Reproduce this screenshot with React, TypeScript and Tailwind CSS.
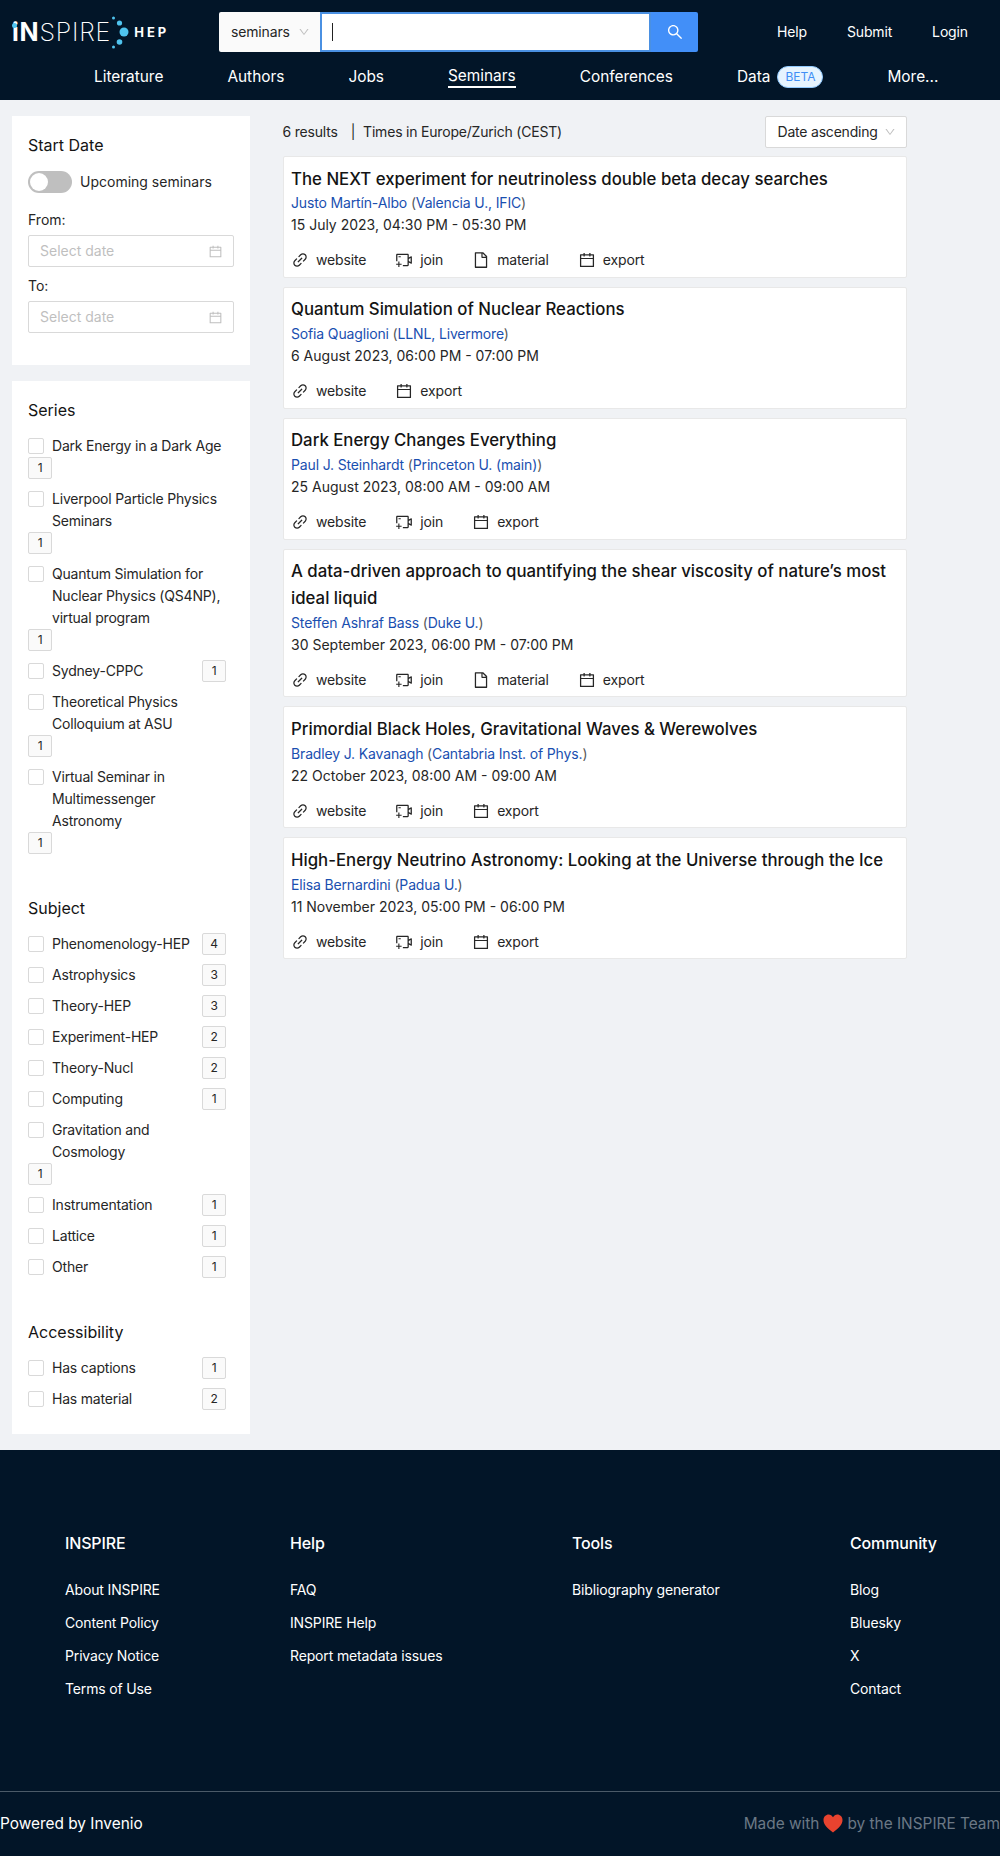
import {
  AiOutlineCalendar,
  AiOutlineDown,
  AiOutlineFile,
  AiOutlineLink,
  AiOutlineSearch,
  AiOutlineVideoCameraAdd,
} from "react-icons/ai";

type Seminar = {
  title: string;
  speaker: string;
  affiliation: string;
  date: string;
  join?: boolean;
  material?: boolean;
};

const seminars: Seminar[] = [
  {
    title: "The NEXT experiment for neutrinoless double beta decay searches",
    speaker: "Justo Martín-Albo",
    affiliation: "Valencia U., IFIC",
    date: "15 July 2023, 04:30 PM - 05:30 PM",
    join: true,
    material: true,
  },
  {
    title: "Quantum Simulation of Nuclear Reactions",
    speaker: "Sofia Quaglioni",
    affiliation: "LLNL, Livermore",
    date: "6 August 2023, 06:00 PM - 07:00 PM",
  },
  {
    title: "Dark Energy Changes Everything",
    speaker: "Paul J. Steinhardt",
    affiliation: "Princeton U. (main)",
    date: "25 August 2023, 08:00 AM - 09:00 AM",
    join: true,
  },
  {
    title: "A data-driven approach to quantifying the shear viscosity of nature’s most ideal liquid",
    speaker: "Steffen Ashraf Bass",
    affiliation: "Duke U.",
    date: "30 September 2023, 06:00 PM - 07:00 PM",
    join: true,
    material: true,
  },
  {
    title: "Primordial Black Holes, Gravitational Waves & Werewolves",
    speaker: "Bradley J. Kavanagh",
    affiliation: "Cantabria Inst. of Phys.",
    date: "22 October 2023, 08:00 AM - 09:00 AM",
    join: true,
  },
  {
    title: "High-Energy Neutrino Astronomy: Looking at the Universe through the Ice",
    speaker: "Elisa Bernardini",
    affiliation: "Padua U.",
    date: "11 November 2023, 05:00 PM - 06:00 PM",
    join: true,
  },
];

const series: [string, number][] = [
  ["Dark Energy in a Dark Age", 1],
  ["Liverpool Particle Physics Seminars", 1],
  ["Quantum Simulation for Nuclear Physics (QS4NP), virtual program", 1],
  ["Sydney-CPPC", 1],
  ["Theoretical Physics Colloquium at ASU", 1],
  ["Virtual Seminar in Multimessenger Astronomy", 1],
];

const subjects: [string, number][] = [
  ["Phenomenology-HEP", 4],
  ["Astrophysics", 3],
  ["Theory-HEP", 3],
  ["Experiment-HEP", 2],
  ["Theory-Nucl", 2],
  ["Computing", 1],
  ["Gravitation and Cosmology", 1],
  ["Instrumentation", 1],
  ["Lattice", 1],
  ["Other", 1],
];

const accessibility: [string, number][] = [
  ["Has captions", 1],
  ["Has material", 2],
];

const footerColumns = [
  { title: "INSPIRE", width: "w-[225px]", links: ["About INSPIRE", "Content Policy", "Privacy Notice", "Terms of Use"] },
  { title: "Help", width: "w-[282px]", links: ["FAQ", "INSPIRE Help", "Report metadata issues"] },
  { title: "Tools", width: "w-[278px]", links: ["Bibliography generator"] },
  { title: "Community", width: "w-[100px]", links: ["Blog", "Bluesky", "X", "Contact"] },
];

function Logo() {
  return (
    <div className="relative flex items-center h-10 w-[170px] ml-3 text-white">
      <span className="text-[25px] leading-none tracking-[0.8px] font-extralight">
        <span className="font-bold">iN</span>SPIRE
      </span>
      <svg width="24" height="40" viewBox="0 0 24 40" className="shrink-0 -ml-[1px]">
        <circle cx="14" cy="20" r="4.5" fill="#4fc3ee" />
        <circle cx="9.5" cy="11" r="2.6" fill="#4fc3ee" />
        <circle cx="9.5" cy="30" r="2.8" fill="#4fc3ee" />
        <circle cx="3.5" cy="6" r="1.5" fill="#4fc3ee" />
        <circle cx="3.5" cy="35" r="1.5" fill="#4fc3ee" />
      </svg>
      <span className="text-[13px] leading-none font-bold tracking-[3px]">HEP</span>
      <span className="absolute left-0 top-[11px] w-[5px] h-[5px] rounded-full bg-[#4fc3ee]" />
    </div>
  );
}

function Header() {
  return (
    <header className="h-[100px] bg-[#021528] text-white">
      <div className="flex items-start pt-3 h-[65px]">
        <Logo />
        <div className="flex h-10 ml-[37px]">
          <div className="w-[101px] flex items-center justify-between pl-3 pr-[10px] bg-[#fafafa] rounded-l-[2px] text-[#262626] text-sm tracking-[-0.15px]">
            seminars
            <AiOutlineDown className="text-[#bfbfbf] text-[12px]" />
          </div>
          <div className="w-[331px] bg-white border-2 border-[#4a90e2] flex items-center pl-[10px]">
            <div className="w-[1px] h-[18px] bg-[#222]" />
          </div>
          <div className="w-[47px] bg-[#428ff8] flex items-center justify-center rounded-r-[2px]">
            <AiOutlineSearch className="text-[18px] text-white" />
          </div>
        </div>
        <nav className="flex gap-10 ml-[79px] h-10 items-center text-sm tracking-[-0.15px]">
          <span>Help</span>
          <span>Submit</span>
          <span>Login</span>
        </nav>
      </div>
      <nav className="flex items-center gap-16 pl-[94px] h-[24px] text-[15.4px]">
        <span>Literature</span>
        <span>Authors</span>
        <span>Jobs</span>
        <span className="border-b-2 border-white leading-[20px]">Seminars</span>
        <span>Conferences</span>
        <span className="flex items-center gap-[7px]">
          Data
          <span className="h-[22px] w-[46px] rounded-full bg-[#e6f4ff] border border-[#91caff] text-[#3f8ef5] text-xs flex items-center justify-center">
            BETA
          </span>
        </span>
        <span>More...</span>
      </nav>
    </header>
  );
}

function DateField({ label }: { label: string }) {
  return (
    <div className="mb-2">
      <div className="text-sm leading-[22px] text-[#262626] mb-1">{label}</div>
      <div className="h-8 border border-[#d9d9d9] rounded-[2px] flex items-center justify-between pl-[11px] pr-[10px] text-sm text-[#bfbfbf]">
        Select date
        <AiOutlineCalendar className="text-[15px]" />
      </div>
    </div>
  );
}

function FacetRow({ label, count }: { label: string; count: number }) {
  return (
    <div className="flex flex-wrap justify-between w-[198px] mb-[9px] text-sm leading-[22px] tracking-[-0.2px] text-[#262626]">
      <div className="flex max-w-full">
        <span className="shrink-0 w-4 h-4 mt-[3px] mr-2 bg-white border border-[#d9d9d9] rounded-[2px]" />
        <span>{label}</span>
      </div>
      <span className="w-6 h-[22px] bg-[#fafafa] border border-[#d9d9d9] rounded-[2px] text-xs flex items-center justify-center">
        {count}
      </span>
    </div>
  );
}

function Facet({ title, items, className }: { title: string; items: [string, number][]; className?: string }) {
  return (
    <section className={className}>
      <h3 className="text-base leading-[24px] text-[#141414] mb-[13px]">{title}</h3>
      {items.map(([label, count]) => (
        <FacetRow key={label} label={label} count={count} />
      ))}
    </section>
  );
}

function Sidebar() {
  return (
    <aside className="w-[238px] shrink-0 ml-3">
      <div className="bg-white h-[249px] px-4 pt-[17px] mb-4">
        <h3 className="text-base leading-[24px] text-[#141414] mb-[14px]">Start Date</h3>
        <div className="flex items-center gap-2 mb-4 text-sm text-[#262626]">
          <span className="w-11 h-[22px] rounded-full bg-[#bfbfbf] flex items-center pl-[2px]">
            <span className="w-[18px] h-[18px] rounded-full bg-white" />
          </span>
          Upcoming seminars
        </div>
        <DateField label="From:" />
        <DateField label="To:" />
      </div>
      <div className="bg-white h-[1053px] px-4 pt-[17px]">
        <Facet title="Series" items={series} />
        <Facet title="Subject" items={subjects} className="mt-[42px]" />
        <Facet title="Accessibility" items={accessibility} className="mt-[42px]" />
      </div>
    </aside>
  );
}

function Action({ icon, label }: { icon: React.ReactNode; label: string }) {
  return (
    <span className="flex items-center gap-[7px]">
      <span className="text-[18px] text-[#262626]">{icon}</span>
      {label}
    </span>
  );
}

function SeminarCard({ seminar }: { seminar: Seminar }) {
  return (
    <article className="bg-white border border-[#e8e8e8] rounded-[2px] pl-[7.5px] pr-2 pt-[8.5px] pb-[5.5px]">
      <h2 className="text-[16.8px] leading-[26.88px] font-medium text-[#141414]">{seminar.title}</h2>
      <div className="text-sm leading-[22px] tracking-[-0.15px] text-[#595959]">
        <span className="text-[#1a4fb0]">{seminar.speaker}</span> (
        <span className="text-[#1a4fb0]">{seminar.affiliation}</span>)
      </div>
      <div className="text-sm leading-[22px] text-[#262626]">{seminar.date}</div>
      <div className="flex items-center gap-[29px] h-[22px] mt-[13px] text-sm tracking-[-0.15px] text-[#262626]">
        <Action icon={<AiOutlineLink />} label="website" />
        {seminar.join && <Action icon={<AiOutlineVideoCameraAdd />} label="join" />}
        {seminar.material && <Action icon={<AiOutlineFile />} label="material" />}
        <Action icon={<AiOutlineCalendar />} label="export" />
      </div>
    </article>
  );
}

function Results() {
  return (
    <main className="w-[624px] ml-[32.5px]">
      <div className="flex items-center justify-between h-8 mb-2 text-sm tracking-[-0.2px] text-[#262626]">
        <span>
          6 results<span className="ml-[13px]">|</span>
          <span className="ml-[8px]">Times in Europe/Zurich (CEST)</span>
        </span>
        <span className="w-[142px] h-8 bg-white border border-[#d9d9d9] rounded-[2px] flex items-center justify-between pl-3 pr-[10px]">
          Date ascending
          <AiOutlineDown className="text-[#bfbfbf] text-[12px]" />
        </span>
      </div>
      <div className="flex flex-col gap-[9px]">
        {seminars.map((seminar) => (
          <SeminarCard key={seminar.title} seminar={seminar} />
        ))}
      </div>
    </main>
  );
}

function Footer() {
  return (
    <footer className="h-[406px] bg-[#021528] text-white overflow-hidden">
      <div className="flex h-[341px] pl-[65px] pt-[81px] text-sm tracking-[-0.15px]">
        {footerColumns.map((column) => (
          <div key={column.title} className={`${column.width} shrink-0`}>
            <h4 className="text-base font-medium leading-[24px] mb-6 whitespace-nowrap">{column.title}</h4>
            <ul className="flex flex-col gap-[11px]">
              {column.links.map((link) => (
                <li key={link} className="leading-[22px]">
                  {link}
                </li>
              ))}
            </ul>
          </div>
        ))}
      </div>
      <div className="border-t border-[#4b5a68] flex items-center justify-between h-[65px] text-[15.4px]">
        <span>Powered by Invenio</span>
        <span className="flex items-center gap-[4px] text-[#6b7885]">
          Made with
          <svg width="20" height="19" viewBox="0 0 20 19">
            <path
              d="M10 18.500C4 14 .5 10.500.5 6 .5 2.800 3 .5 5.600.5 7.500.5 9.100 1.600 10 3.300 10.900 1.600 12.500.5 14.400.5 17 .5 19.500 2.800 19.500 6 19.500 10.500 16 14 10 18.500Z"
              fill="#e8432f"
            />
          </svg>
          by the INSPIRE Team
        </span>
      </div>
    </footer>
  );
}

export default function App() {
  return (
    <div className="min-h-[1856px] bg-[#f0f2f5] font-['Inter',sans-serif]">
      <Header />
      <div className="flex items-start pt-4 pb-4">
        <Sidebar />
        <Results />
      </div>
      <Footer />
    </div>
  );
}
